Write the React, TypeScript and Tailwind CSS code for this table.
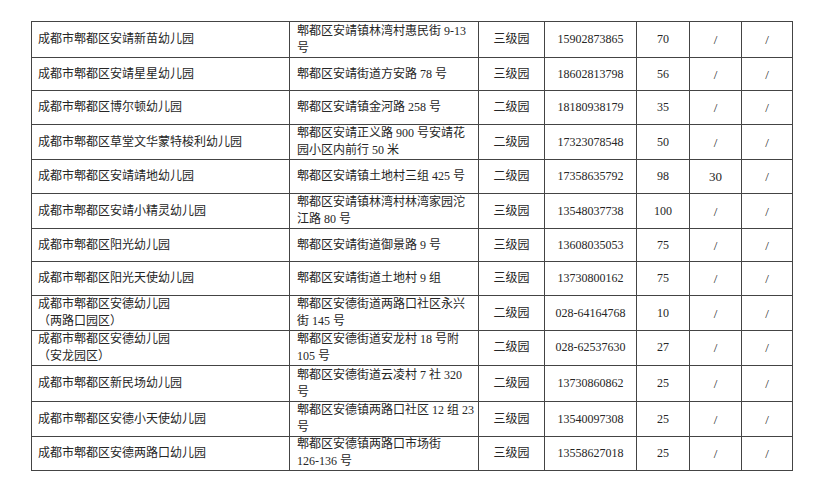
import React from "react";

type Row = { name: React.ReactNode; addr: React.ReactNode; level: string; phone: string; n: string; a: string; b: string };

const rows: Row[] = [
  { name: "成都市郫都区安靖新苗幼儿园", addr: <>郫都区安靖镇林湾村惠民街 9-13<br />号</>, level: "三级园", phone: "15902873865", n: "70", a: "/", b: "/" },
  { name: "成都市郫都区安靖星星幼儿园", addr: "郫都区安靖街道方安路 78 号", level: "三级园", phone: "18602813798", n: "56", a: "/", b: "/" },
  { name: "成都市郫都区博尔顿幼儿园", addr: "郫都区安靖镇金河路 258 号", level: "二级园", phone: "18180938179", n: "35", a: "/", b: "/" },
  { name: "成都市郫都区草堂文华蒙特梭利幼儿园", addr: <>郫都区安靖正义路 900 号安靖花<br />园小区内前行 50 米</>, level: "二级园", phone: "17323078548", n: "50", a: "/", b: "/" },
  { name: "成都市郫都区安靖靖地幼儿园", addr: "郫都区安靖镇土地村三组 425 号", level: "二级园", phone: "17358635792", n: "98", a: "30", b: "/" },
  { name: "成都市郫都区安靖小精灵幼儿园", addr: <>郫都区安靖镇林湾村林湾家园沱<br />江路 80 号</>, level: "三级园", phone: "13548037738", n: "100", a: "/", b: "/" },
  { name: "成都市郫都区阳光幼儿园", addr: "郫都区安靖街道御景路 9 号", level: "三级园", phone: "13608035053", n: "75", a: "/", b: "/" },
  { name: "成都市郫都区阳光天使幼儿园", addr: "郫都区安靖街道土地村 9 组", level: "三级园", phone: "13730800162", n: "75", a: "/", b: "/" },
  { name: <>成都市郫都区安德幼儿园<br />（两路口园区）</>, addr: <>郫都区安德街道两路口社区永兴<br />街 145 号</>, level: "二级园", phone: "028-64164768", n: "10", a: "/", b: "/" },
  { name: <>成都市郫都区安德幼儿园<br />（安龙园区）</>, addr: <>郫都区安德街道安龙村 18 号附<br />105 号</>, level: "二级园", phone: "028-62537630", n: "27", a: "/", b: "/" },
  { name: "成都市郫都区新民场幼儿园", addr: <>郫都区安德街道云凌村 7 社 320<br />号</>, level: "二级园", phone: "13730860862", n: "25", a: "/", b: "/" },
  { name: "成都市郫都区安德小天使幼儿园", addr: <>郫都区安德镇两路口社区 12 组 23<br />号</>, level: "三级园", phone: "13540097308", n: "25", a: "/", b: "/" },
  { name: "成都市郫都区安德两路口幼儿园", addr: <>郫都区安德镇两路口市场街<br />126-136 号</>, level: "三级园", phone: "13558627018", n: "25", a: "/", b: "/" },
];

const heights = [36, 33, 34, 35, 34, 35, 33, 34, 34, 36, 36, 34, 35];

const cell = "border-r border-b border-[#444] flex items-center text-[12px] leading-[17px] text-[#262626]";

export default function App() {
  return (
    <div
      className="w-[821px] h-[493px] bg-white pl-[31px] pt-[21px]"
      style={{ fontFamily: '"Liberation Serif", "Noto Sans CJK SC", serif' }}
    >
      <div className="w-[762px] border-l border-t border-[#444]">
        {rows.map((r, i) => (
          <div
            key={i}
            className="grid grid-cols-[258px_189px_66px_92px_53px_52px_51px]"
            style={{ height: heights[i] }}
          >
            <div className={`${cell} pl-[6px]`}>
              <div>{r.name}</div>
            </div>
            <div className={`${cell} pl-[7px]`}>
              <div>{r.addr}</div>
            </div>
            <div className={`${cell} justify-center text-[#3a3a3a]`}>{r.level}</div>
            <div className={`${cell} justify-center`}>{r.phone}</div>
            <div className={`${cell} justify-center`}>{r.n}</div>
            <div className={`${cell} justify-center text-[13px]`}>{r.a}</div>
            <div className={`${cell} justify-center text-[13px]`}>{r.b}</div>
          </div>
        ))}
      </div>
    </div>
  );
}
